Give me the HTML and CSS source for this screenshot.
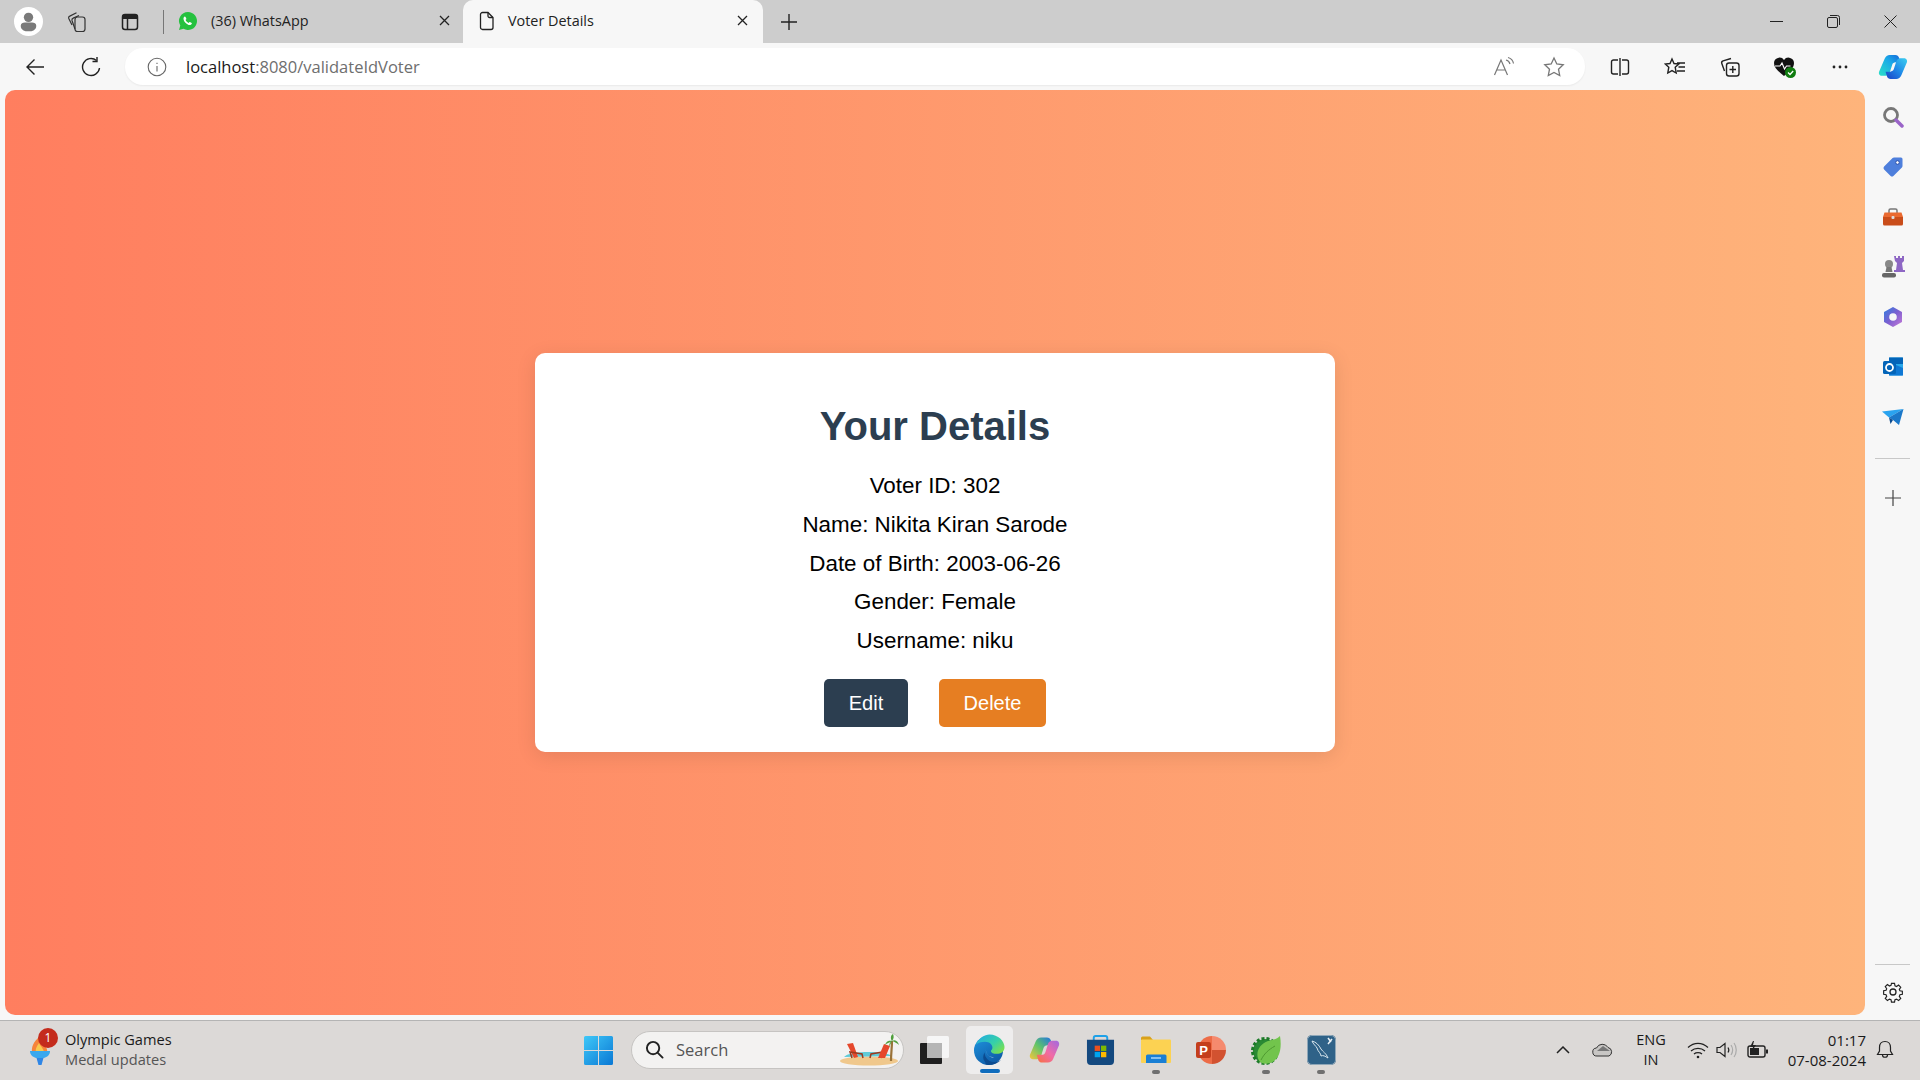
FILE: index.html
```html
<!DOCTYPE html>
<html lang="en">
<head>
<meta charset="utf-8">
<title>Voter Details</title>
<link rel="stylesheet" href="styles.css">
</head>
<body>
<div class="tabbar">
  <div class="slot s-profile"><svg width="29" height="29" viewBox="0 0 28 28"><circle cx="14" cy="14" r="14" fill="#fff"/><circle cx="14" cy="10" r="4.500" fill="#7a7a7a"/><path d="M6.500 18c0-2 2-3 4-3h7c2 0 4 1 4 3 0 4-3.500 5.500-7.500 5.500S6.500 22 6.500 18z" fill="#7a7a7a"/></svg></div>
  <div class="slot s-coll"><svg width="22" height="22" viewBox="0 0 22 22" fill="none" stroke="#333" stroke-width="1.200"><rect x="9" y="6" width="10" height="14.500" rx="2.500"/><path d="M9 18 6 9.500c-.3-1 .2-2 1.200-2.400L13 4.500"/><path d="M6 14 2.800 7.500c-.4-1 0-2 1-2.400L10.500 1.800"/></svg></div>
  <div class="slot s-vert"><svg width="20" height="20" viewBox="0 0 20 20" fill="none" stroke="#222" stroke-width="1.500"><rect x="2.500" y="2.500" width="15" height="15" rx="2.500"/><path d="M2.500 5h15" stroke-width="4"/><path d="M7.500 6v11"/></svg></div>
  <div class="divider-v"></div>
  <div class="tab">
    <svg class="tab-icon" width="20" height="20" viewBox="0 0 20 20"><path d="M10 1a9 9 0 0 0-7.700 13.600L1 19l4.500-1.200A9 9 0 1 0 10 1z" fill="#25c13f"/><path d="M7 5.500c-.4 0-1 .3-1.300 1-.6 1.400 0 3.200 1.500 5 1.600 1.800 3.500 2.800 5 2.500 1-.2 1.700-.9 1.700-1.700 0-.4-1.900-1.400-2.300-1.300-.4.100-.7.900-1 1-.8 0-2.700-1.800-3-2.900 0-.4.800-.7.800-1.100 0-.4-.7-2.400-1.400-2.500z" fill="#fff"/></svg>
    <span class="tab-title">(36) WhatsApp</span>
    <svg class="tab-close" width="11" height="11" viewBox="0 0 11 11" stroke="#222" stroke-width="1.300"><path d="M1 1l9 9M10 1l-9 9"/></svg>
  </div>
  <div class="tab tab-active">
    <svg class="tab-icon" width="16" height="20" viewBox="0 0 16 20" fill="none" stroke="#222" stroke-width="1.300"><path d="M3.500 1.500h5.500l5 5v10a2 2 0 0 1-2 2h-8.500a2 2 0 0 1-2-2v-13a2 2 0 0 1 2-2z"/><path d="M9 1.500v3.500a1.500 1.500 0 0 0 1.500 1.500h3.500"/></svg>
    <span class="tab-title">Voter Details</span>
    <svg class="tab-close" width="11" height="11" viewBox="0 0 11 11" stroke="#222" stroke-width="1.300"><path d="M1 1l9 9M10 1l-9 9"/></svg>
  </div>
  <div class="slot s-plus"><svg width="18" height="18" viewBox="0 0 18 18" stroke="#222" stroke-width="1.400"><path d="M9 1v16M1 9h16"/></svg></div>
  <div class="winctl">
    <div class="slot s-win"><svg width="13" height="13" viewBox="0 0 13 13" stroke="#222" stroke-width="1"><path d="M0 6.500h13"/></svg></div>
    <div class="slot s-win"><svg width="13" height="13" viewBox="0 0 13 13" fill="none" stroke="#222" stroke-width="1"><rect x=".5" y="2.500" width="10" height="10" rx="1.500"/><path d="M3 .5h7.500a2 2 0 0 1 2 2v7.500"/></svg></div>
    <div class="slot s-win"><svg width="13" height="13" viewBox="0 0 13 13" stroke="#222" stroke-width="1"><path d="M.5.5l12 12M12.500.5l-12 12"/></svg></div>
  </div>
</div>

<div class="toolbar">
  <div class="slot s-tool s-back"><svg width="20" height="20" viewBox="0 0 20 20" fill="none" stroke="#222" stroke-width="1.400"><path d="M19 10H2M9.500 2.500 2 10l7.500 7.500"/></svg></div>
  <div class="slot s-tool"><svg width="20" height="22" viewBox="0 0 20 22" fill="none" stroke="#222" stroke-width="1.400"><path d="M15.500 4.500A8.500 8.500 0 1 0 18.500 12"/><path d="M16 1v4.500h-4.500"/></svg></div>
  <div class="address">
    <svg class="addr-info" width="20" height="20" viewBox="0 0 20 20" fill="none" stroke="#666" stroke-width="1.100"><circle cx="10" cy="10" r="8.800"/><path d="M10 9v5.500M10 5.800v1.300"/></svg>
    <span class="url"><span class="url-host">localhost</span>:8080/validateIdVoter</span>
    <svg class="addr-read" width="22" height="22" viewBox="0 0 22 22" fill="none" stroke="#777" stroke-width="1.200"><path d="M1.500 19 8 4l6.500 15M4 14h8"/><path d="M13 4c2 .5 3.500 2 4 4M15 1.500c3 .8 5 3 5.500 6"/></svg>
    <svg class="addr-star" width="22" height="22" viewBox="0 0 22 22" fill="none" stroke="#777" stroke-width="1.300"><path d="m11 2 2.800 6 6.400.8-4.700 4.400 1.200 6.300L11 16.400l-5.700 3.100 1.200-6.300L1.800 8.800 8.200 8z"/></svg>
  </div>
  <div class="tool-right">
    <div class="slot s-tool"><svg width="20" height="20" viewBox="0 0 20 20" fill="none" stroke="#222" stroke-width="1.400"><path d="M8 3H3.500A2 2 0 0 0 1.500 5v10a2 2 0 0 0 2 2H8M12 3h4.500a2 2 0 0 1 2 2v10a2 2 0 0 1-2 2H12"/><path d="M10 1v18"/></svg></div>
    <div class="slot s-tool"><svg width="22" height="20" viewBox="0 0 22 20" fill="none" stroke="#222" stroke-width="1.400"><path d="m8 2 2 4.500 4.800.5-3.600 3.200 1 5.800L8 13.600 3.800 16l1-5.800L1.200 7 6 6.500zM13 6h8M14.500 10h6.500M13 14h8"/></svg></div>
    <div class="slot s-tool"><svg width="20" height="20" viewBox="0 0 20 20" fill="none" stroke="#222" stroke-width="1.400"><rect x="6.500" y="6" width="12.500" height="13" rx="2.500"/><path d="M12.800 9v7M9.500 12.500h6.500"/><path d="M4.500 14 1.800 6.500c-.4-1.100.2-2.200 1.300-2.600L11 1.500"/></svg></div>
    <div class="slot s-tool"><svg width="24" height="24" viewBox="0 0 24 24"><path d="M11 21C5 16 1 13 1 8a5.500 5.500 0 0 1 10-3 5.500 5.500 0 0 1 10 3c0 5-4 8-10 13z" fill="#111"/><path d="M2 11h5l2-3 2.500 6 2-3h4" fill="none" stroke="#fff" stroke-width="1.100"/><circle cx="17.500" cy="17.500" r="5.500" fill="#107c10"/><path d="m15 17.500 2 2 3.200-3.500" fill="none" stroke="#fff" stroke-width="1.300"/></svg></div>
    <div class="slot s-tool"><svg width="16" height="4" viewBox="0 0 16 4" fill="#222"><circle cx="2" cy="2" r="1.400"/><circle cx="8" cy="2" r="1.400"/><circle cx="14" cy="2" r="1.400"/></svg></div>
    <div class="slot s-tool s-copilot"><svg width="30" height="26" viewBox="0 0 32 28"><defs><linearGradient id="cpa" x1="0" y1="1" x2="1" y2="0"><stop offset="0" stop-color="#2be0c8"/><stop offset=".6" stop-color="#1aa8e8"/><stop offset="1" stop-color="#1565d8"/></linearGradient><linearGradient id="cpb" x1="0" y1="1" x2="1" y2="0"><stop offset="0" stop-color="#1b3fc4"/><stop offset=".5" stop-color="#1f8ae8"/><stop offset="1" stop-color="#3cd0f0"/></linearGradient></defs><path d="M12.500 1h6c2 0 3.500 1.200 4 3l1.500 5H19c-2 0-3.500 1-4 3l-2.500 8c-.6 2-2.200 3.500-4.500 3.500H4C1.500 23.500.3 21 1 19l6-14c1-2.500 3-4 5.500-4z" fill="url(#cpa)"/><path d="M19.500 27h-6c-2 0-3.500-1.200-4-3L8 19h5c2 0 3.500-1 4-3l2.500-8c.6-2 2.200-3.500 4.500-3.500h4c2.500 0 3.700 2.500 3 4.500l-6 14c-1 2.500-3 4-5.500 4z" fill="url(#cpb)"/></svg></div>
  </div>
</div>

<div class="main">
  <div class="page">
    <div class="card">
      <h1 class="card-title">Your Details</h1>
      <p class="field">Voter ID: 302</p>
      <p class="field">Name: Nikita Kiran Sarode</p>
      <p class="field">Date of Birth: 2003-06-26</p>
      <p class="field">Gender: Female</p>
      <p class="field">Username: niku</p>
      <div class="actions">
        <button class="btn btn-edit">Edit</button>
        <button class="btn btn-delete">Delete</button>
      </div>
    </div>
  </div>
  <div class="sidebar">
    <div class="slot s-side"><svg width="22" height="22" viewBox="0 0 22 22" fill="none"><circle cx="9" cy="9" r="6.500" stroke="#777" stroke-width="2.800"/><path d="m14 14 6 6" stroke="#9a64c8" stroke-width="3.500" stroke-linecap="round"/></svg></div>
    <div class="slot s-side"><svg width="22" height="22" viewBox="0 0 22 22"><path d="M12 1.500h7a1.500 1.500 0 0 1 1.500 1.500v7c0 .6-.2 1-.6 1.400l-8.500 8.500a2 2 0 0 1-2.800 0l-6.500-6.500a2 2 0 0 1 0-2.800l8.500-8.500c.4-.4.800-.6 1.400-.6z" fill="#4e7fdc"/><circle cx="15.500" cy="6.500" r="1.800" fill="#fff" stroke="#2c4fa8"/></svg></div>
    <div class="slot s-side"><svg width="22" height="20" viewBox="0 0 22 20"><path d="M7 6V3.500A1.500 1.500 0 0 1 8.500 2h5A1.500 1.500 0 0 1 15 3.500V6" fill="none" stroke="#777" stroke-width="1.500"/><path d="M2.500 5.500h17L21 10H1z" fill="#ea6a30"/><path d="M1 10h20v7a1.500 1.500 0 0 1-1.500 1.500h-17A1.500 1.500 0 0 1 1 17z" fill="#c94d1a"/><rect x="9.500" y="9" width="3" height="3" rx="1" fill="#ddd"/></svg></div>
    <div class="slot s-side"><svg width="24" height="24" viewBox="0 0 24 24"><circle cx="8" cy="9" r="4" fill="#888"/><path d="M5.500 12h5l1 5h-7z" fill="#777"/><rect x="1" y="18" width="14" height="4.500" rx="2" fill="#666"/><path d="M13 1h2v2h2V1h2v2h2V1h2v5l-2 2 1 7h2v2h-11v-2h2l1-7-2-2z" fill="#8e67c4"/></svg></div>
    <div class="slot s-side"><svg width="22" height="22" viewBox="0 0 22 22"><defs><linearGradient id="m3a" x1="0" y1="0" x2="1" y2="1"><stop offset="0" stop-color="#2f7fe0"/><stop offset=".5" stop-color="#7c5fd0"/><stop offset="1" stop-color="#c77bd8"/></linearGradient></defs><path d="M11 1 20 6v10l-9 5-9-5V6z" fill="url(#m3a)"/><circle cx="11" cy="11" r="3.800" fill="#f7f7f7"/></svg></div>
    <div class="slot s-side"><svg width="22" height="22" viewBox="0 0 22 22"><rect x="7" y="1.500" width="14" height="18" rx="1" fill="#28a8ea"/><path d="M7 1.500h14V8H7z" fill="#0364b8"/><path d="M7 12l7-3 7 3v7.500H7z" fill="#0f78d4"/><rect x="1" y="5" width="13" height="13" rx="1.500" fill="#0364b8"/><circle cx="7.500" cy="11.500" r="3.500" fill="none" stroke="#fff" stroke-width="1.800"/></svg></div>
    <div class="slot s-side"><svg width="22" height="18" viewBox="0 0 22 18"><path d="M0 3.500 21.500 1 7 9.500z" fill="#2aa3ef"/><path d="M7 9.500 21.500 1 17 17 11 12z" fill="#1b78c9"/><path d="M7 9.500 8.500 16l2.500-4z" fill="#0b4a8f"/></svg></div>
    <div class="side-rule"></div>
    <div class="slot s-side s-add"><svg width="16" height="16" viewBox="0 0 16 16" stroke="#444" stroke-width="1.200"><path d="M8 0v16M0 8h16"/></svg></div>
    <div class="side-bottom">
      <div class="side-rule side-rule-b"></div>
      <div class="slot s-side"><svg width="22" height="22" viewBox="0 0 22 22" fill="none" stroke="#222" stroke-width="1.300"><circle cx="11" cy="11" r="3"/><path d="M9.300 1.500h3.400l.5 2.700 1.700.7 2.300-1.600 2.400 2.400-1.600 2.300.7 1.700 2.700.5v3.400l-2.700.5-.7 1.700 1.600 2.300-2.400 2.400-2.300-1.600-1.700.7-.5 2.700H9.300l-.5-2.700-1.700-.7-2.300 1.600-2.400-2.400 1.600-2.300-.7-1.700-2.700-.5V9.600l2.700-.5.7-1.700L2.400 5.100 4.800 2.700l2.300 1.600 1.700-.7z" transform="translate(1.100 1.100) scale(.9)"/></svg></div>
    </div>
  </div>
</div>

<div class="taskbar">
  <div class="widget">
    <div class="torch">
      <svg width="22" height="31" viewBox="0 0 22 31"><path d="M12 1C7 6 2 10 3 19h15c1-5-2-6-2-10-1 1-2 1-2 0 0-3-1-6-2-8z" fill="#f6843a"/><path d="M10 9c-2 3-4 6-3 10h8c0-4-3-6-5-10z" fill="#f8c94d"/><path d="M1 17h20c0 4-3 6-6 7H7c-3-1-6-3-6-7z" fill="#3aa8ee"/><path d="M7.500 24h7l-2 7h-3z" fill="#2f86e6"/></svg>
      <span class="badge">1</span>
    </div>
    <div class="widget-text">
      <span class="w-title">Olympic Games</span>
      <span class="w-sub">Medal updates</span>
    </div>
  </div>
  <svg class="start" width="29" height="29" viewBox="0 0 29 29"><defs><linearGradient id="win" x1="0" y1="0" x2="1" y2="1"><stop offset="0" stop-color="#3fc8f8"/><stop offset="1" stop-color="#0a78d4"/></linearGradient></defs><path d="M0 1.500A1.500 1.500 0 0 1 1.500 0H14v14H0zM15 0h12.500A1.500 1.500 0 0 1 29 1.500V14H15zM0 15h14v14H1.500A1.500 1.500 0 0 1 0 27.500zM15 15h14v12.500a1.500 1.500 0 0 1-1.500 1.500H15z" fill="url(#win)"/></svg>
  <div class="searchbox">
    <svg width="19" height="19" viewBox="0 0 20 20" fill="none" stroke="#222" stroke-width="2"><circle cx="8.500" cy="8.500" r="6.500"/><path d="m13.500 13.500 5 5" stroke-linecap="round"/></svg>
    <span class="search-text">Search</span>
    <svg class="beach" width="60" height="32" viewBox="0 0 60 32"><ellipse cx="29" cy="27" rx="29" ry="4.500" fill="#f0c88c"/><path d="M4 23c4-6 40-7 48-1z" fill="#5fcbd8"/><path d="M7 10l6-1 5 14-4 1-3-6z" fill="#e5482c"/><path d="M12 24l-2-6 12 2 1 4M41 24l2-6-12 2-1 4" fill="none" stroke="#9c3a20" stroke-width="1.500"/><path d="M38 24l6-14 6 2-5 12z" fill="#e5482c"/><path d="M51 27c0-8 1-14 1-20" stroke="#9a7238" stroke-width="2.200" fill="none"/><path d="M52 7c-5-1-6 2-7 4 2-2 4-2 7-4zM52 7c4-2 6 1 7 4-2-2-4-3-7-4zM52 7c-2-3-1-6 1-7 1 2 1 5-1 7zM52 7c-2 1-3 3-3 6 1-2 2-4 3-6z" fill="#4f9e3c"/></svg>
  </div>
  <div class="apps">
    <div class="app"><svg width="30" height="28" viewBox="0 0 30 28"><rect x="0" y="7" width="22" height="21" rx="1" fill="#1f1f1f"/><rect x="7" y="0" width="22" height="22" rx="1.500" fill="#f6f6f6"/><rect x="7" y="7" width="15" height="15" fill="#b5b5b5"/></svg></div>
    <div class="app app-active"><svg width="31" height="31" viewBox="0 0 32 32"><defs><linearGradient id="eda" x1="0" y1="0" x2=".6" y2="1"><stop offset="0" stop-color="#1f96e0"/><stop offset="1" stop-color="#0f5ca8"/></linearGradient><linearGradient id="edb" x1="0" y1="0" x2="1" y2=".8"><stop offset="0" stop-color="#1fa8e8"/><stop offset=".6" stop-color="#36d0a8"/><stop offset="1" stop-color="#7fe04a"/></linearGradient></defs><circle cx="15" cy="17" r="15" fill="url(#eda)"/><path d="M2 11C5 4 11 .5 16 .5c9 0 15.500 7 15.500 13 0 5-4 7-8 7-3 0-6-1-6-3 0-.8 1.500-1 1.500-3.500 0-3-3-6-7.500-6S4 9 2 11z" fill="url(#edb)"/><path d="M11 19c0 6 5 10 10 10 2 0 5-1 7-2.500C25 30 20 32 15 32 10 31 13 30 11 28c-2-2-2-6 0-9z" fill="#0c4c90"/><path d="M12 14c0 7 3 10 9 10-5 1-9-3-9-10z" fill="#f7f7f7" fill-opacity=".85"/></svg><span class="pip pip-blue"></span></div>
    <div class="app"><svg width="31" height="28" viewBox="0 0 32 28"><defs><linearGradient id="cop1" x1="0" y1="1" x2="1" y2="0"><stop offset="0" stop-color="#f4c63d"/><stop offset=".5" stop-color="#5fc46a"/><stop offset="1" stop-color="#1f6fe8"/></linearGradient><linearGradient id="cop2" x1="0" y1="1" x2="1" y2="0"><stop offset="0" stop-color="#f8703a"/><stop offset=".5" stop-color="#f06ba8"/><stop offset="1" stop-color="#a06ae0"/></linearGradient></defs><path d="M12.500 1h6c2 0 3.500 1.200 4 3l1.500 5H19c-2 0-3.500 1-4 3l-2.500 8c-.6 2-2.200 3.500-4.500 3.500H4C1.500 23.500.3 21 1 19l6-14c1-2.500 3-4 5.500-4z" fill="url(#cop1)"/><path d="M19.500 27h-6c-2 0-3.500-1.200-4-3L8 19h5c2 0 3.500-1 4-3l2.500-8c.6-2 2.200-3.500 4.500-3.500h4c2.500 0 3.700 2.500 3 4.500l-6 14c-1 2.500-3 4-5.500 4z" fill="url(#cop2)"/></svg></div>
    <div class="app"><svg width="29" height="30" viewBox="0 0 30 31"><path d="M8 6V3a2 2 0 0 1 2-2h10a2 2 0 0 1 2 2v3" fill="none" stroke="#1ea1e8" stroke-width="2"/><path d="M1 5h28v22a4 4 0 0 1-4 4H5a4 4 0 0 1-4-4z" fill="#14497f"/><rect x="9" y="11" width="5.500" height="5.500" fill="#e8501f"/><rect x="15.500" y="11" width="5.500" height="5.500" fill="#7fba00"/><rect x="9" y="17.500" width="5.500" height="5.500" fill="#00a4ef"/><rect x="15.500" y="17.500" width="5.500" height="5.500" fill="#ffb900"/></svg></div>
    <div class="app"><svg width="30" height="27" viewBox="0 0 30 27"><path d="M0 2a1.500 1.500 0 0 1 1.500-1.500H9l3 3.500H0z" fill="#d9a11a"/><rect y="3.500" width="30" height="23.500" rx="1" fill="#fcd252"/><path d="M5 27v-7a1.500 1.500 0 0 1 1.500-1.500H24a1.500 1.500 0 0 1 1.500 1.500V27z" fill="#1a7fd4"/><path d="M10 22h10" stroke="#bfe3ff" stroke-width="1.300"/></svg><span class="pip"></span></div>
    <div class="app"><svg width="30" height="28" viewBox="0 0 30 28"><path d="M16 0a14 14 0 0 1 14 14H16z" fill="#f58a6e"/><path d="M30 14a14 14 0 0 1-14 14V14z" fill="#d25230"/><path d="M16 0a14 14 0 0 0 0 28z" fill="#ed6c47"/><rect x="0" y="6" width="15" height="16" rx="2" fill="#c43e1c"/><text x="7.500" y="19" class="ppt-letter">P</text></svg></div>
    <div class="app"><svg width="30" height="30" viewBox="0 0 30 30"><circle cx="14" cy="16" r="12" fill="#2a8a34"/><circle cx="14" cy="16" r="12.500" fill="none" stroke="#1c7a28" stroke-width="3" stroke-dasharray="3 2"/><path d="M9 27C3 19 8 9 17 6c5-1 9-2 12-5 2 12 0 24-10 27-4 1-7 1-10-1z" fill="#72c44c"/><path d="M10 25C13 19 17 15 24 11" stroke="#4e9a30" stroke-width="1" fill="none"/></svg><span class="pip"></span></div>
    <div class="app"><svg width="29" height="30" viewBox="0 0 29 30"><rect width="29" height="30" rx="5" fill="#2f6288"/><rect x=".5" y=".5" width="28" height="29" rx="4.500" fill="none" stroke="#8fa7b8"/><path d="M5 6c4 1 7 4 9 8 2 3 5 4 7 9-3-2-5-3-7-2 0-3-3-4-4-8-1-2-4-4-5-7z" fill="none" stroke="#d8e6ee" stroke-width="1"/><path d="m21 3 3 4M25 4l-4 5" stroke="#e8f0f5" stroke-width="1.500"/></svg><span class="pip"></span></div>
  </div>
  <div class="tray">
    <div class="t-slot t40"><svg width="14" height="8" viewBox="0 0 14 8" fill="none" stroke="#222" stroke-width="1.500"><path d="m1 7 6-6 6 6"/></svg></div>
    <div class="t-slot t40"><svg width="22" height="14" viewBox="0 0 22 14"><path d="M5 13a4 4 0 0 1-.5-8A6.500 6.500 0 0 1 16 4.500 4.500 4.500 0 0 1 17 13z" fill="#c8c6c4" stroke="#333" stroke-width="1"/><path d="M5 8l6-5 7 5z" fill="#777"/></svg></div>
    <div class="t-slot t56 lang"><span>ENG</span><span>IN</span></div>
    <div class="t-slot t-wifi"><svg width="22" height="18" viewBox="0 0 22 18" fill="none" stroke="#222" stroke-width="1.300"><path d="M1 6.500c6-5.500 14-5.500 20 0M4 10c4-3.500 10-3.500 14 0M7 13c2.200-1.800 5.800-1.800 8 0"/><circle cx="11" cy="16" r="1.300" fill="#222" stroke="none"/></svg></div>
    <div class="t-slot t-vol"><svg width="22" height="18" viewBox="0 0 22 18" fill="none" stroke="#222" stroke-width="1.200"><path d="M1 6.500h3L9 2.500v13L4 11.500H1z"/><path d="M12 6.500c1 1.500 1 3.500 0 5"/><path d="M15 4c2 3 2 7 0 10M18 2c3 4 3 10 0 14" stroke="#aaa"/></svg></div>
    <div class="t-slot t-bat"><svg width="22" height="18" viewBox="0 0 22 18" fill="none"><rect x="1" y="5" width="17" height="11" rx="2" stroke="#222" stroke-width="1.400"/><rect x="3" y="7" width="9" height="7" fill="#222"/><rect x="19" y="8.500" width="2" height="4" fill="#222"/><path d="M6 0 3 6h3l-1 4 4-6H6l1-4z" fill="#222"/></svg></div>
    <div class="clock"><span>01:17</span><span>07-08-2024</span></div>
    <div class="t-slot t-bell"><svg width="18" height="20" viewBox="0 0 18 20" fill="none" stroke="#222" stroke-width="1.200"><path d="M9 1.500c-3.500 0-5.500 2.500-5.500 6v3.500L1.500 14.500h15L14.500 11V7.500c0-3.500-2-6-5.500-6z"/><path d="M6.500 15c0 3 5 3 5 0"/></svg></div>
  </div>
</div>
</body>
</html>
```
FILE: styles.css
```css
* { box-sizing: border-box; }
html, body { margin: 0; height: 100%; }
body {
  width: 1920px;
  height: 1080px;
  overflow: hidden;
  display: flex;
  flex-direction: column;
  background: #f7f7f7;
  font-family: "Liberation Sans", Arial, sans-serif;
}
.slot { display: flex; align-items: center; justify-content: center; flex: none; }

/* tab strip */
.tabbar { height: 43px; flex: none; display: flex; align-items: stretch; background: #cdcdcd; }
.s-profile { width: 56px; }
.s-coll { width: 42px; }
.s-vert { width: 64px; }
.divider-v { width: 1px; height: 24px; margin: 10px 1px 0 1px; background: #777; flex: none; }
.tab {
  width: 298px;
  flex: none;
  display: flex;
  align-items: center;
  padding: 0 13px 2px 13px;
  font-family: "Open Sans", sans-serif;
  font-size: 14.4px;
  color: #222;
}
.tab-icon { flex: none; }
.tab-title { margin-left: 13px; }
.tab-close { margin-left: auto; flex: none; }
.tab-active { width: 300px; padding-left: 16px; padding-right: 15px; background: #f7f7f7; border-radius: 10px 10px 0 0; }
.s-plus { width: 20px; margin-left: 16px; }
.winctl { margin-left: auto; display: flex; margin-right: 1px; }
.s-win { width: 57px; }

/* toolbar */
.toolbar { height: 47px; flex: none; display: flex; align-items: flex-start; padding: 5px 0 0 8px; background: #f7f7f7; }
.s-tool { width: 55px; height: 37px; }
.s-back { margin-left: -1px; margin-right: 1px; }
.s-copilot { margin-left: -2px; }
.address {
  width: 1460px;
  height: 37px;
  margin-left: 7px;
  flex: none;
  display: flex;
  align-items: center;
  padding-left: 22px;
  background: #fff;
  border-radius: 18px;
  box-shadow: 0 1px 2px rgba(0,0,0,.06);
  font-family: "Open Sans", sans-serif;
}
.addr-info { flex: none; }
.url { margin-left: 19px; font-size: 16.5px; color: #6e6e6e; }
.url-host { color: #1a1a1a; }
.addr-read { margin-left: auto; flex: none; }
.addr-star { margin-left: 28px; margin-right: 20px; flex: none; }
.tool-right { display: flex; margin-left: 7px; }

/* main */
.main { height: 930px; flex: none; display: flex; align-items: flex-start; background: #f7f7f7; }
.page {
  width: 1860px;
  height: 925px;
  margin-left: 5px;
  flex: none;
  display: flex;
  align-items: center;
  justify-content: center;
  border-radius: 10px;
  background: linear-gradient(90deg, #ff7e5f, #feb47b);
}
.card {
  width: 800px;
  height: 399px;
  padding: 51px 40px 25px;
  text-align: center;
  background: #fff;
  border-radius: 10px;
  box-shadow: 0 4px 20px rgba(0,0,0,.1);
}
.card-title { margin: 0 0 24px; font-size: 40px; font-weight: 700; color: #2c3e50; }
.field { margin: 12.8px 0; font-size: 22.4px; color: #000; }
.actions { display: flex; justify-content: center; gap: 31px; margin-top: 25px; }
.btn { border: 0; padding: 0; height: 48px; font-family: inherit; font-size: 20px; color: #fff; border-radius: 5px; }
.btn-edit { width: 84px; background: #2c3e50; }
.btn-delete { width: 107px; background: #e67e22; }

/* sidebar */
.sidebar { width: 55px; height: 930px; flex: none; display: flex; flex-direction: column; align-items: center; padding-top: 2px; }
.s-side { width: 55px; height: 50px; }
.side-rule { width: 35px; height: 1px; background: #c8c8c8; margin-top: 16px; flex: none; }
.s-add { margin-top: 14px; }
.side-bottom { margin-top: auto; margin-bottom: 3px; display: flex; flex-direction: column; align-items: center; }
.side-rule-b { margin: 0 0 2px; }

/* taskbar */
.taskbar {
  height: 60px;
  flex: none;
  display: flex;
  align-items: center;
  padding-bottom: 2px;
  border-top: 1px solid #b4b4b4;
  background: #dcd9d7;
  font-family: "Open Sans", sans-serif;
  color: #1a1a1a;
}
.widget { width: 584px; flex: none; display: flex; align-items: center; padding-left: 29px; }
.torch { position: relative; width: 36px; height: 31px; flex: none; }
.badge {
  position: absolute;
  left: 9px;
  top: -6px;
  width: 20px;
  height: 20px;
  border-radius: 50%;
  background: #c42b1c;
  color: #fff;
  font-size: 12px;
  line-height: 20px;
  text-align: center;
}
.widget-text { display: flex; flex-direction: column; gap: 1px; font-size: 14.6px; line-height: 19px; }
.w-sub { color: #555; }
.start { flex: none; margin-top: 1px; }
.searchbox {
  width: 273px;
  height: 38px;
  margin-left: 18px;
  flex: none;
  display: flex;
  align-items: center;
  padding-left: 13px;
  background: #f3f2f1;
  border: 1px solid #c6c4c2;
  border-radius: 19px;
}
.search-text { margin-left: 12px; font-size: 16.5px; color: #555; }
.beach { margin-left: auto; margin-right: 3px; flex: none; }
.apps { display: flex; margin-left: 3px; }
.app { position: relative; width: 55.3px; height: 48px; flex: none; display: flex; align-items: center; justify-content: center; }
.app-active { background: #eeeded; border-radius: 5px; width: 47px; margin: 0 4px; }
.pip { position: absolute; left: 50%; bottom: 0; width: 8px; height: 4px; margin-left: -4px; border-radius: 2px; background: #707070; }
.pip-blue { width: 20px; margin-left: -10px; background: #0f6cbd; bottom: 1px; }
.ppt-letter { font-family: "Liberation Sans", sans-serif; font-size: 13px; font-weight: 700; fill: #fff; text-anchor: middle; }
.tray { margin-left: auto; display: flex; align-items: center; padding-right: 16px; }
.t-slot { display: flex; align-items: center; justify-content: center; flex: none; }
.t40 { width: 40px; }
.t56 { width: 56px; }
.lang { flex-direction: column; font-size: 14.5px; line-height: 20px; }
.t-wifi { width: 28px; margin-left: 5px; }
.t-vol { width: 30px; }
.t-bat { width: 32px; }
.clock { width: 92px; flex: none; display: flex; flex-direction: column; align-items: flex-end; font-size: 15px; line-height: 20px; }
.t-bell { width: 38px; }
```
